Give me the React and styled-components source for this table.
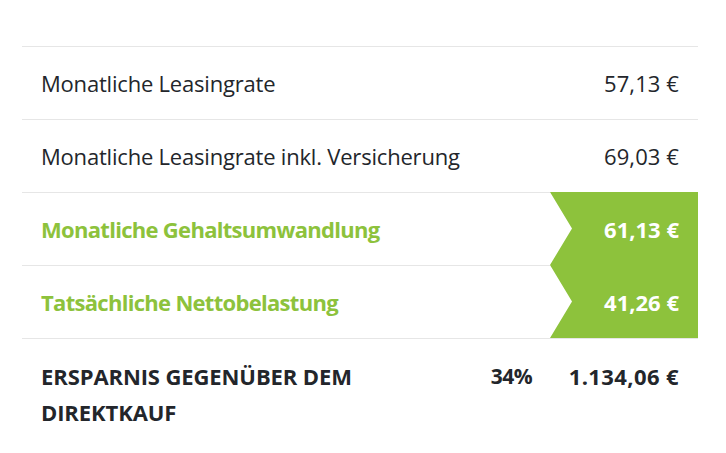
import React from "react";
import styled, { createGlobalStyle } from "styled-components";

const Global = createGlobalStyle`
  html, body { margin: 0; padding: 0; background: #fff; }
  body { font-family: "Open Sans", "Noto Sans", sans-serif; color: #23262b; }
`;

const Wrap = styled.div`
  padding: 46px 28px 0 22px;
`;

const Table = styled.div`
  display: flex;
  flex-direction: column;
`;

const Row = styled.div`
  display: grid;
  grid-template-columns: 1fr auto 148px;
  min-height: 73px;
`;

const Cell = styled.div`
  border-top: 1px solid ${(p) => (p.$hl ? "transparent" : "#e6e6e6")};
  display: flex;
  align-items: center;
`;

const Label = styled(Cell)`
  padding: 0 19px;
  font-size: 22px;
  letter-spacing: ${(p) => (p.$bold ? "-0.7px" : "-0.2px")};
  font-weight: ${(p) => (p.$bold ? 700 : 400)};
  color: ${(p) => (p.$green ? "#8dc23c" : "#23262b")};
`;

const SumLabel = styled(Cell)`
  padding: 19px 19px 20px;
  align-items: flex-start;
  font-size: 22px;
  font-weight: 700;
  line-height: 36px;
  letter-spacing: -0.1px;
  text-transform: uppercase;
`;

const SumText = styled.span`
  max-width: 345px;
`;

const Pct = styled(Cell)`
  font-size: 21px;
  font-weight: 700;
  letter-spacing: -0.6px;
  padding: 19px 18px 0 0;
  line-height: 36px;
  align-items: flex-start;
`;

const Value = styled(Cell)`
  justify-content: flex-end;
  padding-right: 19px;
  font-size: 22px;
  letter-spacing: ${(p) => (p.$bold ? "0px" : "0.1px")};
  font-weight: ${(p) => (p.$bold ? 700 : 400)};
  background: ${(p) => (p.$hl ? "#8dc23c" : "transparent")};
  color: ${(p) => (p.$hl ? "#ffffff" : "#23262b")};
  clip-path: ${(p) =>
    p.$hl ? "polygon(0 0, 100% 0, 100% 100%, 0 100%, 22px 50%)" : "none"};
  ${(p) => p.$top && "padding-top: 19px; line-height: 36px; align-items: flex-start; letter-spacing: 0.4px;"}
`;

const rows = [
  { label: "Monatliche Leasingrate", value: "57,13 €" },
  { label: "Monatliche Leasingrate inkl. Versicherung", value: "69,03 €" },
  { label: "Monatliche Gehaltsumwandlung", value: "61,13 €", hl: true },
  { label: "Tatsächliche Nettobelastung", value: "41,26 €", hl: true },
];

export default function App() {
  return (
    <>
      <Global />
      <Wrap>
        <Table>
          {rows.map((r) => (
            <Row key={r.label}>
              <Label $green={r.hl} $bold={r.hl}>
                {r.label}
              </Label>
              <Cell />
              <Value $hl={r.hl} $bold={r.hl}>
                {r.value}
              </Value>
            </Row>
          ))}
          <Row>
            <SumLabel>
              <SumText>Ersparnis gegenüber dem Direktkauf</SumText>
            </SumLabel>
            <Pct>34%</Pct>
            <Value $bold $top>
              1.134,06 €
            </Value>
          </Row>
        </Table>
      </Wrap>
    </>
  );
}
